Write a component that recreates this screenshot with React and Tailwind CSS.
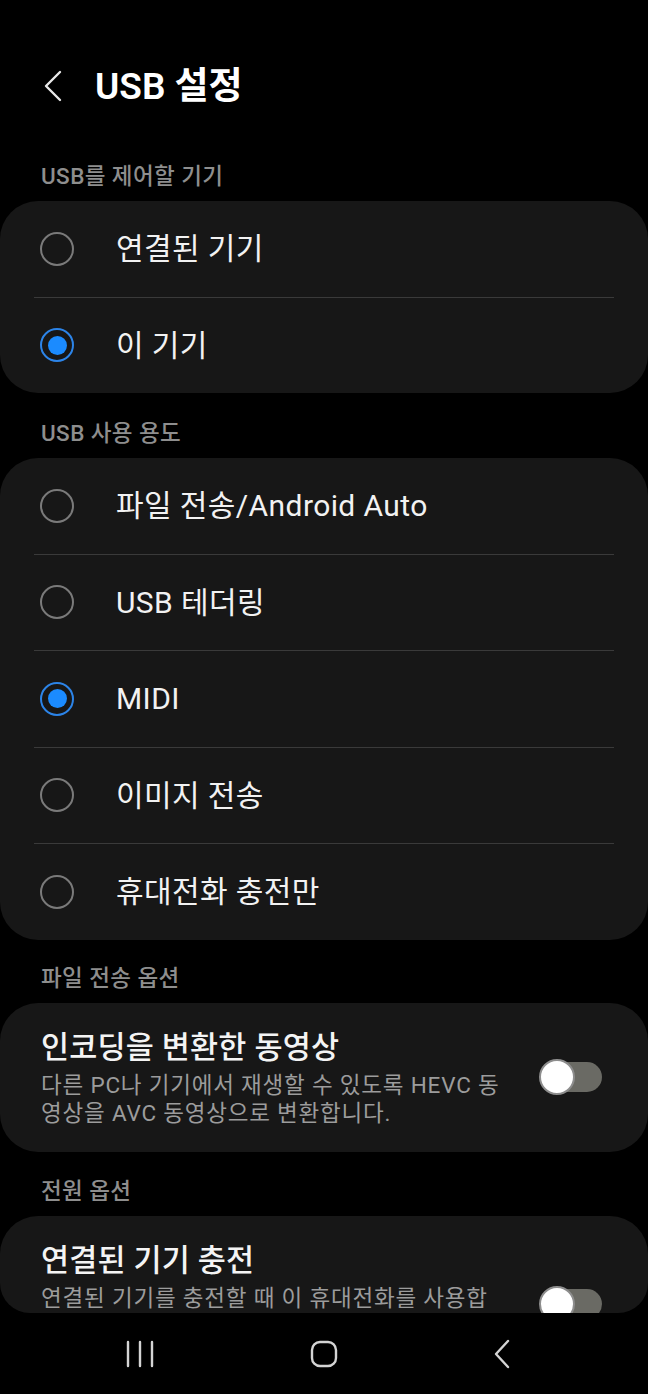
// USB 설정 화면 (One UI 다크 모드). 라디오 목록 두 묶음 + 토글 옵션 두 개.

const FONT = { fontFamily: 'Roboto, "Noto Sans CJK KR", sans-serif' };

function Radio({ checked }) {
  if (checked) {
    return (
      <span className="w-[34px] h-[34px] rounded-full border-2 border-[#2c84e8] flex items-center justify-center shrink-0">
        <span className="w-[19px] h-[19px] rounded-full bg-[#1b8bff]" />
      </span>
    );
  }
  return <span className="w-[34px] h-[34px] rounded-full border-2 border-[#7a7a7a] shrink-0" />;
}

function SectionLabel({ children, pt }) {
  return (
    <div className={'px-[41px] pb-[12px] text-[22.5px] leading-[26px] tracking-[0.4px] font-medium text-[#8e8e8e] ' + pt}>
      {children}
    </div>
  );
}

function RadioCard({ items }) {
  return (
    <div className="bg-[#171717] rounded-[38px]">
      {items.map((it, i) => (
        <div key={it.label}>
          {i > 0 && <div className="mx-[34px] h-px bg-[#3a3a3a]" />}
          <div className="h-[95.5px] flex items-center pl-[40px]">
            <Radio checked={it.checked} />
            <span className="ml-[42px] text-[30px] tracking-[0.4px] text-[#f2f2f2]">{it.label}</span>
          </div>
        </div>
      ))}
    </div>
  );
}

function Toggle() {
  return (
    <div className="relative w-[63px] h-[36px] shrink-0">
      <div className="absolute left-[4px] right-0 top-[3px] h-[30px] rounded-full bg-[#6a6a64]" />
      <div className="absolute left-0 top-0 w-[36px] h-[36px] rounded-full bg-white border-2 border-[#8d8d8d]" />
    </div>
  );
}

function ToggleCard({ title, lines, extra = 0 }) {
  return (
    <div className="bg-[#171717] rounded-[38px] pl-[41px] pr-[46px] pt-[25px] pb-[25px] flex items-center">
      <div className="flex-1 min-w-0">
        <div className="text-[30.5px] leading-[40px] font-medium tracking-[0.2px] text-[#f4f4f4] whitespace-nowrap">{title}</div>
        <div className="mt-[3px] text-[22.5px] leading-[28px] tracking-[0.8px] text-[#9c9c9c] whitespace-nowrap">
          {lines.map((l, i) => (
            <div key={i}>{l}</div>
          ))}
        </div>
        {extra > 0 && <div style={{ height: extra }} />}
      </div>
      <Toggle />
    </div>
  );
}

export default function App() {
  return (
    <div className="w-[648px] h-[1394px] bg-black flex flex-col overflow-hidden" style={FONT}>
      <div className="h-[1313px] overflow-hidden rounded-b-[30px]">
        <div className="h-[140px] pt-[62px]">
          <div className="h-[48px] flex items-center">
            <svg width="24" height="34" viewBox="0 0 24 34" className="ml-[41px]">
              <path d="M19 3 L5 17 L19 31" fill="none" stroke="#e8e8e8" strokeWidth="2.4" strokeLinecap="round" strokeLinejoin="round" />
            </svg>
            <span className="ml-[30px] text-[37px] font-semibold text-white leading-none">USB 설정</span>
          </div>
        </div>

        <SectionLabel pt="pt-[23px]">USB를 제어할 기기</SectionLabel>
        <RadioCard
          items={[
            { label: '연결된 기기', checked: false },
            { label: '이 기기', checked: true },
          ]}
        />

        <SectionLabel pt="pt-[27px]">USB 사용 용도</SectionLabel>
        <RadioCard
          items={[
            { label: '파일 전송/Android Auto', checked: false },
            { label: 'USB 테더링', checked: false },
            { label: 'MIDI', checked: true },
            { label: '이미지 전송', checked: false },
            { label: '휴대전화 충전만', checked: false },
          ]}
        />

        <SectionLabel pt="pt-[25px]">파일 전송 옵션</SectionLabel>
        <ToggleCard
          title="인코딩을 변환한 동영상"
          lines={['다른 PC나 기기에서 재생할 수 있도록 HEVC 동', '영상을 AVC 동영상으로 변환합니다.']}
        />

        <SectionLabel pt="pt-[26px]">전원 옵션</SectionLabel>
        <ToggleCard title="연결된 기기 충전" lines={['연결된 기기를 충전할 때 이 휴대전화를 사용합']} extra={56} />
      </div>

      <div className="flex-1 flex items-center justify-between pl-[124px] pr-[136px]">
        <svg width="32" height="28" viewBox="0 0 32 28">
          <path d="M4 2 V26 M16 2 V26 M28 2 V26" stroke="#d4d4d4" strokeWidth="2.4" strokeLinecap="round" />
        </svg>
        <svg width="28" height="28" viewBox="0 0 28 28">
          <rect x="2" y="2" width="24" height="24" rx="8" fill="none" stroke="#d4d4d4" strokeWidth="2.4" />
        </svg>
        <svg width="20" height="30" viewBox="0 0 20 30">
          <path d="M16 2 L4 15 L16 28" fill="none" stroke="#d4d4d4" strokeWidth="2.4" strokeLinecap="round" strokeLinejoin="round" />
        </svg>
      </div>
    </div>
  );
}
